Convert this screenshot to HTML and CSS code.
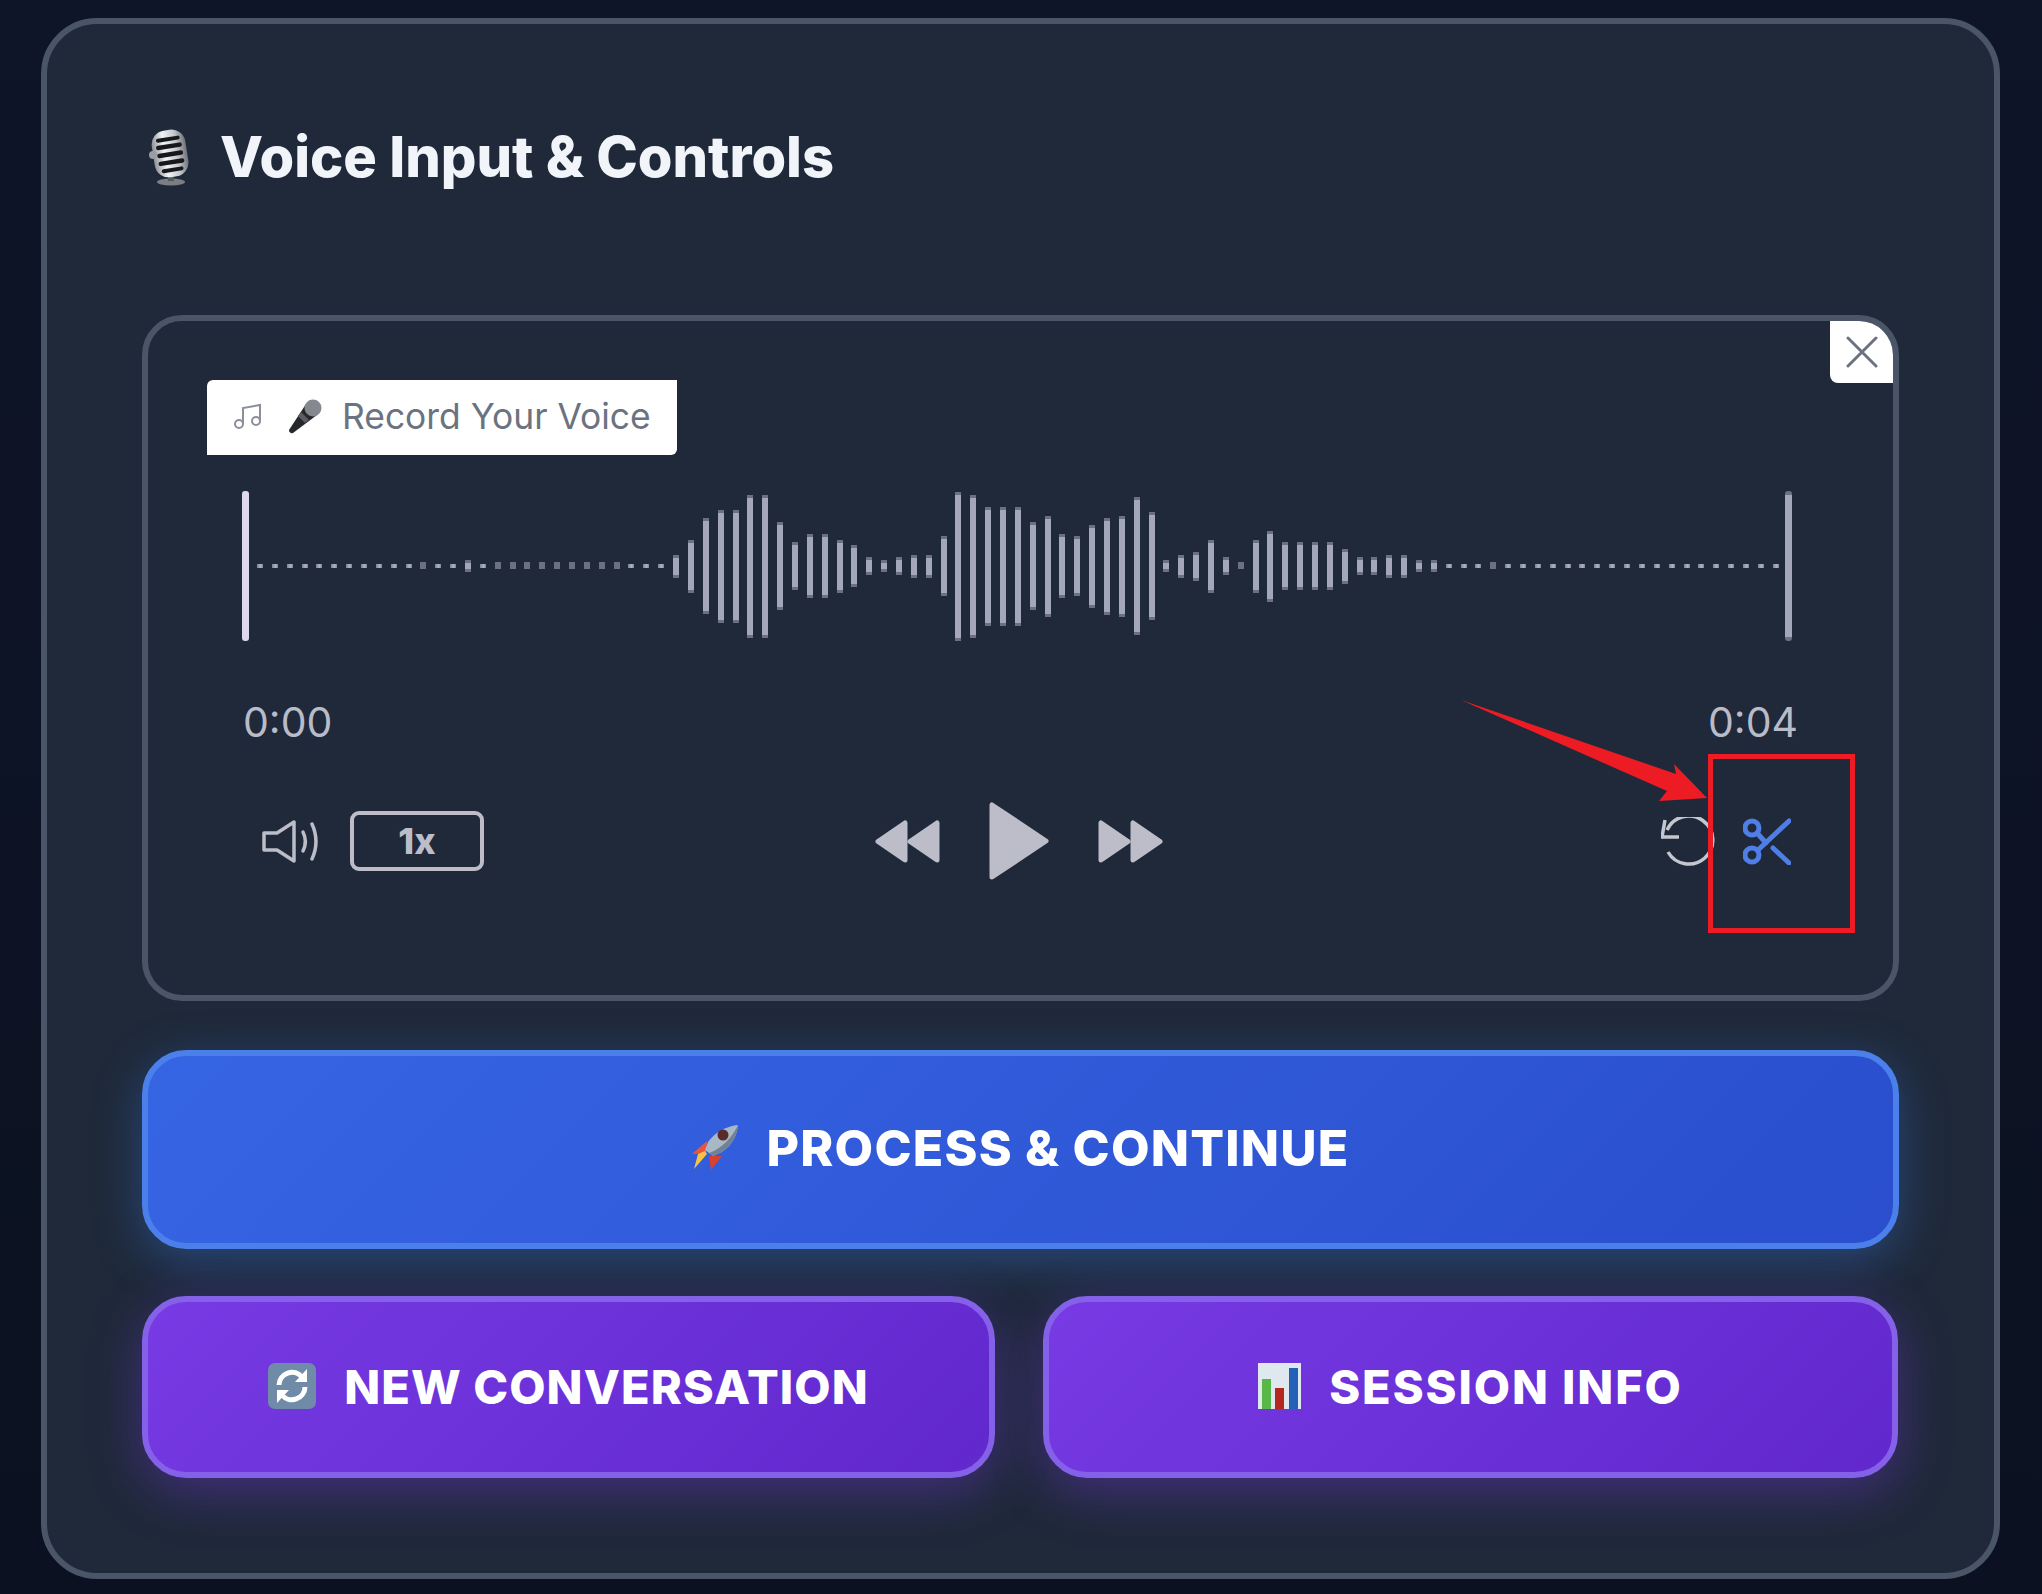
FILE: index.html
```html
<!DOCTYPE html>
<html lang="en">
<head>
    <meta charset="UTF-8">
    <meta name="viewport" content="width=device-width, initial-scale=1.0">
    <title>Voice Input &amp; Controls</title>
    <link rel="stylesheet" href="styles.css">
</head>
<body>
    <div class="panel">
        <h2 class="panel-title">
            <svg class="title-mic" viewBox="0 0 42 57">
                <defs>
                    <linearGradient id="chrome" x1="0" y1="0" x2="1" y2="0">
                        <stop offset="0" stop-color="#8d9096"/>
                        <stop offset=".35" stop-color="#f2f4f6"/>
                        <stop offset=".7" stop-color="#c4c8cc"/>
                        <stop offset="1" stop-color="#6d7075"/>
                    </linearGradient>
                </defs>
                <ellipse cx="23" cy="53" rx="14" ry="3.5" fill="#7b7e83"/>
                <rect x="20" y="44" width="6" height="8" fill="#55585c"/>
                <g transform="rotate(-9 22 24)">
                    <rect x="5" y="1" width="34" height="47" rx="14" fill="url(#chrome)"/>
                    <rect x="10" y="8" width="24" height="4" rx="2" fill="#16181c"/>
                    <rect x="9" y="15" width="26" height="4.5" rx="2" fill="#16181c"/>
                    <rect x="9" y="23" width="26" height="4.5" rx="2" fill="#16181c"/>
                    <rect x="9" y="31" width="26" height="4.5" rx="2" fill="#16181c"/>
                    <rect x="11" y="39" width="22" height="4" rx="2" fill="#16181c"/>
                </g>
                <circle cx="5" cy="26" r="4" fill="#9a9da2"/>
            </svg>
            Voice Input &amp; Controls
        </h2>

        <div class="player">
            <button class="close-btn">
                <svg class="close-icon" viewBox="0 0 32 32"><path d="M2 2l28 28M30 2L2 30"/></svg>
            </button>

            <div class="block-label">
                <svg class="notes-icon" viewBox="0 0 27 26">
                    <circle cx="5" cy="21" r="4"/>
                    <circle cx="22" cy="18" r="4"/>
                    <path d="M9 21V5l17-3v16"/>
                </svg>
                <svg class="label-mic" viewBox="0 0 35 35">
                    <path d="M19 5l11 11L6 34c-2 1-4-1-4-3z" fill="#26282c"/>
                    <path d="M14 13l8 8-4 3-7-7z" fill="#5a5d62"/>
                    <circle cx="26" cy="9" r="8.5" fill="#85888e"/>
                </svg>
                <span>Record Your Voice</span>
            </div>

            <div class="player-body">
                <div class="waveform" id="waveform">
                    <div class="handle handle-left"></div>
                    <div class="bars" id="bars"></div>
                    <div class="handle handle-right"></div>
                </div>

                <div class="times">
                    <span>0:00</span>
                    <span>0:04</span>
                </div>

                <div class="controls">
                    <div class="controls-left">
                        <svg class="speaker-icon" viewBox="0 0 59 43">
                            <path d="M3 13h13L33 2v39L16 30H3z"/>
                            <path d="M42 12c3 6 3 13 0 19"/>
                            <path d="M51 4c5 11 5 24 0 35"/>
                        </svg>
                        <button class="speed-btn">1x</button>
                    </div>
                    <div class="controls-center">
                        <svg class="skip-icon" viewBox="0 0 65 43">
                            <polygon points="30,3 30,40 3,21.5"/>
                            <polygon points="62,3 62,40 35,21.5"/>
                        </svg>
                        <svg class="play-icon" viewBox="0 0 60 78">
                            <polygon points="3,3 3,75 57,39"/>
                        </svg>
                        <svg class="skip-icon" viewBox="0 0 65 43">
                            <polygon points="3,3 3,40 30,21.5"/>
                            <polygon points="35,3 35,40 62,21.5"/>
                        </svg>
                    </div>
                    <div class="controls-right">
                        <svg class="undo-icon" viewBox="0 0 54 49">
                            <path d="M6 13A24 24 0 1 1 7 35"/>
                            <path d="M4 3L1 20H18"/>
                        </svg>
                        <svg class="scissors-icon" viewBox="0 0 48 47">
                            <circle cx="9" cy="10" r="7"/>
                            <circle cx="9" cy="37" r="7"/>
                            <path d="M15 16l8 9M30 30l16 15M15 32L46 3"/>
                        </svg>
                    </div>
                </div>
            </div>
        </div>

        <button class="action-btn primary">
            <svg class="btn-emoji rocket" viewBox="0 0 48 46">
                <path d="M16 16L1 29l14-1z" fill="#e8573a"/>
                <path d="M31 31L20 45l-2-14z" fill="#d8412f"/>
                <path d="M16 29L3 44l4-15 7-3z" fill="#f6c445"/>
                <path d="M47 0C36 1 24 7 17 17l-3 8 8 6 9-4C41 20 46 11 47 0z" fill="#a9b8c6"/>
                <path d="M47 0C46 11 41 20 31 27l-9 4-4-3C30 24 41 13 47 0z" fill="#6f8296"/>
                <circle cx="32" cy="10" r="5.5" fill="#5a2b2b"/>
            </svg>
            <span>PROCESS &amp; CONTINUE</span>
        </button>

        <div class="action-row">
            <button class="action-btn secondary">
                <svg class="btn-emoji refresh" viewBox="0 0 48 46">
                    <rect width="48" height="46" rx="7" fill="#6f8ba8"/>
                    <path d="M11 22a13 13 0 0 1 23-8" fill="none" stroke="#fff" stroke-width="5"/>
                    <path d="M39 6v13H27z" fill="#fff"/>
                    <path d="M37 24a13 13 0 0 1-23 8" fill="none" stroke="#fff" stroke-width="5"/>
                    <path d="M9 40V27h12z" fill="#fff"/>
                </svg>
                <span>NEW CONVERSATION</span>
            </button>
            <button class="action-btn secondary session">
                <svg class="btn-emoji chart" viewBox="0 0 43 46">
                    <rect width="43" height="46" fill="#dfe8ee"/>
                    <rect x="4" y="16" width="9" height="30" fill="#58b847"/>
                    <rect x="17" y="25" width="9" height="21" fill="#b5281e"/>
                    <rect x="31" y="5" width="9" height="41" fill="#2360b8"/>
                </svg>
                <span>SESSION INFO</span>
            </button>
        </div>
    </div>

    <svg class="annotation" viewBox="0 0 2042 1594">
        <polygon points="1461,700 1676,774 1674,764 1707,798 1659,801 1667,791"/>
        <rect x="1710.5" y="756.5" width="142" height="174"/>
    </svg>

    <script src="script.js"></script>
</body>
</html>
```

FILE: styles.css
```css
*{
    box-sizing: border-box;
}
body{
    background: linear-gradient(#0e1528, #0b1120);
    margin: 0;
    height: 1594px;
    overflow: hidden;
    position: relative;
    font-family: Inter, "Liberation Sans", sans-serif;
}
svg{
    display: block;
    flex: none;
}
button{
    font-family: inherit;
}

.panel{
    width: 1959px;
    margin: 18px 0 0 41px;
    padding: 98px 95px 95px;
    background-color: #1f2939;
    border: 6px solid #4a5568;
    border-radius: 56px;
}
.panel-title{
    display: flex;
    align-items: center;
    gap: 30px;
    height: 70px;
    margin: 0 0 123px 6px;
    color: #f1f5f9;
    font-size: 56px;
    font-weight: 800;
}
.title-mic{
    width: 42px;
    height: 57px;
}

.player{
    position: relative;
    height: 686px;
    padding: 59px;
    border: 6px solid #4a5568;
    border-radius: 40px;
}
.close-btn{
    position: absolute;
    top: 0;
    right: 0;
    width: 63px;
    height: 62px;
    padding: 0;
    display: flex;
    align-items: center;
    justify-content: center;
    background: #fff;
    border: none;
    border-radius: 0 34px 0 8px;
}
.close-icon{
    width: 32px;
    height: 32px;
    fill: none;
    stroke: #6b7280;
    stroke-width: 3;
    stroke-linecap: round;
}

.block-label{
    display: flex;
    align-items: center;
    width: 470px;
    height: 75px;
    padding: 0 0 3px 27px;
    background: #fff;
    border-radius: 6px 0 6px 0;
    color: #6b7280;
    font-size: 35.4px;
}
.notes-icon{
    width: 27px;
    height: 26px;
    margin-right: 26px;
    fill: none;
    stroke: #8b8f99;
    stroke-width: 2;
}
.label-mic{
    width: 35px;
    height: 35px;
    margin-right: 20px;
}

.player-body{
    padding: 0 36px 0 35px;
}
.waveform{
    display: flex;
    align-items: center;
    justify-content: space-between;
    height: 150px;
    margin: 36px 6px 0 0;
}
.handle{
    width: 7px;
    height: 150px;
    border-radius: 3px;
}
.handle-left{
    background: #ddd8ee;
}
.handle-right{
    background: linear-gradient(#6b7083 4px, #a3a7b8 4px, #a3a7b8 calc(100% - 4px), #6b7083 calc(100% - 4px));
}
.bars{
    display: flex;
    align-items: center;
    gap: 8.87px;
    margin: 0 auto 0 8px;
}
.bar{
    width: 6px;
    background: linear-gradient(#6b7083 3px, #a3a7b8 3px, #a3a7b8 calc(100% - 3px), #6b7083 calc(100% - 3px));
}
.bar.dot{
    background: linear-gradient(90deg, #7d8295, #b0b4c2 60%, #7d8295);
}
.bar.dim{
    background: #6b7083;
    margin-top: -2px;
}

.times{
    display: flex;
    justify-content: space-between;
    height: 44px;
    margin: 59px 0 0 1px;
    color: #b9bbc8;
    font-size: 41px;
    line-height: 44px;
}

.controls{
    display: grid;
    grid-template-columns: 1fr auto 1fr;
    align-items: center;
    height: 78px;
    margin-top: 58px;
}
.controls-left{
    display: flex;
    align-items: center;
    gap: 30px;
    margin-left: 19px;
}
.controls-center{
    display: flex;
    align-items: center;
    gap: 49px;
    margin-right: 3px;
}
.controls-right{
    display: flex;
    align-items: center;
    justify-content: flex-end;
    gap: 28px;
    margin-right: 7px;
}
.speaker-icon{
    width: 59px;
    height: 43px;
    fill: none;
    stroke: #bcbdc9;
    stroke-width: 3.5;
    stroke-linejoin: round;
    stroke-linecap: round;
}
.speed-btn{
    width: 134px;
    height: 60px;
    padding: 0;
    background: none;
    border: 4px solid #bcbdc9;
    border-radius: 9px;
    color: #bcbdc9;
    font-size: 36px;
    font-weight: 800;
}
.skip-icon{
    width: 65px;
    height: 43px;
}
.play-icon{
    width: 60px;
    height: 78px;
}
.skip-icon polygon,
.play-icon polygon{
    fill: #bcbdc9;
    stroke: #bcbdc9;
    stroke-width: 5;
    stroke-linejoin: round;
}
.undo-icon{
    width: 54px;
    height: 49px;
    fill: none;
    stroke: #c4c6d0;
    stroke-width: 3.5;
}
.scissors-icon{
    width: 48px;
    height: 47px;
    fill: none;
    stroke: #4f7fe6;
    stroke-width: 5;
    stroke-linecap: round;
}

.action-btn{
    display: flex;
    align-items: center;
    justify-content: center;
    width: 100%;
    padding: 0;
    color: #fff;
    font-weight: 800;
    border-style: solid;
    border-width: 6px;
    border-radius: 44px;
}
.primary{
    height: 199px;
    margin-top: 49px;
    padding-bottom: 4px;
    gap: 27px;
    background: linear-gradient(135deg, #3665e4, #2a4ecd);
    border-color: #4b80ea;
    box-shadow: 0 12px 48px rgba(59,130,246,0.35);
    font-size: 50px;
    letter-spacing: 0.024em;
}
.action-row{
    display: grid;
    grid-template-columns: 853px 855px;
    gap: 48px;
    margin-top: 47px;
}
.secondary{
    height: 182px;
    padding-bottom: 2px;
    gap: 28px;
    background: linear-gradient(135deg, #773ae4, #6128cd);
    border-color: #8461e8;
    box-shadow: 0 14px 52px rgba(124,58,237,0.38);
    font-size: 47px;
    letter-spacing: 0.023em;
}
.session{
    letter-spacing: 0.04em;
}
.rocket{
    width: 48px;
    height: 46px;
}
.refresh{
    width: 48px;
    height: 46px;
}
.chart{
    width: 43px;
    height: 46px;
}

.annotation{
    position: absolute;
    top: 0;
    left: 0;
    width: 2042px;
    height: 1594px;
    pointer-events: none;
}
.annotation polygon{
    fill: #ed1c24;
}
.annotation rect{
    fill: none;
    stroke: #ed1c24;
    stroke-width: 5;
}
```

FILE: script.js
```js
// waveform heights, one per bar. 4 = silence dot, 7 = the dim square ones
const peaks = [
    4,4,4,4,4,4,4,4,4,4,4,7,4,4,12,4,7,7,7,7,7,7,7,7,7,4,4,4,
    23,53,96,113,113,143,143,88,48,64,64,53,42,18,12,18,23,
    23,60,149,143,119,119,119,88,101,64,60,83,97,101,138,108,
    12,23,29,53,18,7,53,71,48,48,48,48,35,18,18,23,23,12,12,
    4,4,4,7,4,4,4,4,4,4,4,4,4,4,4,4,4,4,4,4,4,4,4
];

const bars = document.getElementById('bars');
peaks.forEach(peak => {
    const bar = document.createElement('div');
    bar.className = 'bar';
    if (peak === 4) bar.classList.add('dot');
    if (peak === 7) bar.classList.add('dim');
    bar.style.height = peak + 'px';
    bars.appendChild(bar);
});
```
